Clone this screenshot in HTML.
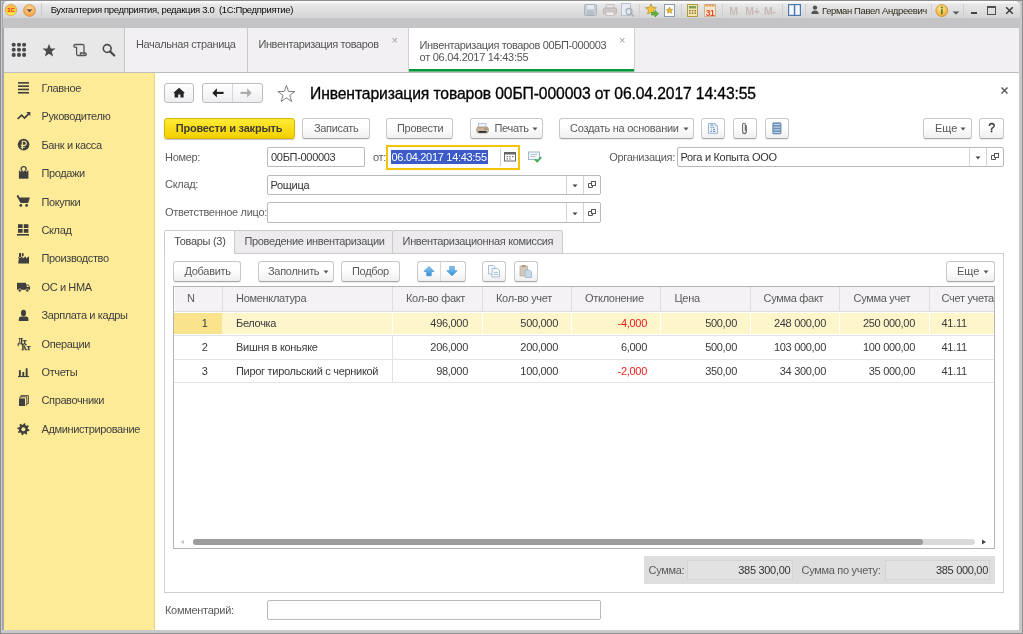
<!DOCTYPE html>
<html><head><meta charset="utf-8">
<style>
*{box-sizing:border-box;margin:0;padding:0}
html,body{width:1023px;height:634px;overflow:hidden;background:#a4a4a4}
body{font-family:"Liberation Sans",sans-serif;font-size:11px;color:#3c3c3c;position:relative}
.a{position:absolute}
.t{position:absolute;white-space:nowrap;line-height:1}
.btn{position:absolute;border:1px solid #c8c8c8;border-bottom-color:#a9a9a9;border-radius:3px;background:linear-gradient(#ffffff 40%,#f0eff1);box-shadow:0 1px 0 rgba(0,0,0,.08)}
.inp{position:absolute;border:1px solid #b9b9b9;border-radius:2px;background:#fff}
</style></head><body>

<div id="root" style="position:absolute;left:0;top:0;width:1023px;height:634px;overflow:hidden;will-change:transform">
<div class="a" style="left:0px;top:0px;width:1023px;height:634px;background:#8e8e8e"></div>
<div class="a" style="left:1px;top:1px;width:1021px;height:632px;background:#c9c9c9"></div>
<div class="a" style="left:2px;top:2px;width:1017px;height:628px;background:#a4a7ac"></div>
<div class="a" style="left:3px;top:1px;width:1017px;height:17px;background:linear-gradient(#fbfbfb 0px,#f6f6f6 2px,#e8e8e8 3px,#d5d5d5 17px);border-radius:5px 5px 0 0"></div>
<div class="a" style="left:3px;top:18px;width:1017px;height:10px;background:#c4c4c7"></div>
<div class="a" style="left:4px;top:28px;width:1015px;height:45px;background:#f3f0f3;border-bottom:1px solid #bdbdbd"></div>
<div class="a" style="left:4px;top:28px;width:121px;height:44px;background:#e8e8e8;border-right:1px solid #c6c6c6"></div>
<div class="a" style="left:4px;top:73px;width:151px;height:557px;background:#fdeb98;border-right:1px solid #e9d27a"></div>
<div class="a" style="left:155px;top:73px;width:864px;height:557px;background:#fff"></div>
<svg class="a" style="left:4px;top:3px;" width="14" height="14" viewBox="0 0 14 14"><defs><linearGradient id="g1c" x1="0" y1="0" x2="0" y2="1"><stop offset="0" stop-color="#f7b24a"/><stop offset="0.55" stop-color="#fbd23a"/><stop offset="1" stop-color="#f4f04a"/></linearGradient></defs><circle cx="7" cy="7" r="5.8" fill="url(#g1c)" stroke="#d9a070" stroke-width="0.8"/><text x="7" y="9" font-family="Liberation Sans" font-weight="bold" font-size="6" fill="#e8211c" text-anchor="middle">1С</text></svg>
<svg class="a" style="left:22px;top:3px;" width="15" height="15" viewBox="0 0 15 15"><defs><radialGradient id="gdd" cx="0.5" cy="0.35" r="0.6"><stop offset="0" stop-color="#ffd9a0"/><stop offset="1" stop-color="#f5a23c"/></radialGradient></defs><circle cx="7.5" cy="7.5" r="6" fill="url(#gdd)" stroke="#c89060" stroke-width="0.7"/><path d="M4.5 6.3 L10.5 6.3 L7.5 9.6 Z" fill="#6a5a48"/></svg>
<div class="a" style="left:41px;top:3px;width:1px;height:13px;background:#c9c9c9"></div>
<div class="t" style="left:50.7px;top:5.44px;font-size:9.5px;color:#080808;letter-spacing:-0.35px;font-weight:normal;">Бухгалтерия предприятия, редакция 3.0&nbsp;&nbsp;(1С:Предприятие)</div>
<svg class="a" style="left:584px;top:4px;" width="13" height="12" viewBox="0 0 13 12"><rect x="0.5" y="0.5" width="12" height="11" rx="1" fill="#c5ccd6" stroke="#aab4c0"/><rect x="3" y="1" width="7" height="4" fill="#e6eaef"/><rect x="3" y="7" width="7" height="4" fill="#b5bec9"/></svg>
<svg class="a" style="left:603px;top:4px;" width="14" height="12" viewBox="0 0 14 12"><rect x="3" y="0.5" width="8" height="4" fill="#e8e2e2" stroke="#c8c0c0"/><rect x="0.5" y="4" width="13" height="6" rx="1.5" fill="#cfc7c7" stroke="#b9b0b0"/><rect x="3" y="8" width="8" height="3.5" fill="#eee" stroke="#c8c0c0"/></svg>
<svg class="a" style="left:621px;top:3px;" width="14" height="14" viewBox="0 0 14 14"><rect x="0.5" y="0.5" width="9" height="12" fill="#e7ecf2" stroke="#b8c2cc"/><circle cx="8" cy="8.5" r="3" fill="none" stroke="#a8b0b8" stroke-width="1.3"/><path d="M10 10.5 L13 13.5" stroke="#a8b0b8" stroke-width="1.6"/></svg>
<div class="a" style="left:639px;top:4px;width:1px;height:13px;background:#cfcfcf"></div>
<svg class="a" style="left:645px;top:3px;" width="14" height="14" viewBox="0 0 14 14"><path d="M6 0.8 L7.6 4.4 L11.4 4.7 L8.5 7.2 L9.4 11 L6 9 L2.6 11 L3.5 7.2 L0.6 4.7 L4.4 4.4 Z" fill="#f2c53d" stroke="#b98a20" stroke-width="0.7"/><path d="M6.5 9.5 L10 9.5 L10 7.5 L13.5 10.8 L10 14 L10 12 L6.5 12 Z" fill="#5fb83a" stroke="#3e8a22" stroke-width="0.6"/></svg>
<svg class="a" style="left:664px;top:4px;" width="11" height="13" viewBox="0 0 11 13"><rect x="0.5" y="0.5" width="10" height="12" fill="#fff" stroke="#8a9ab0"/><path d="M5.5 3 L6.5 5.2 L8.8 5.4 L7 6.9 L7.6 9.2 L5.5 8 L3.4 9.2 L4 6.9 L2.2 5.4 L4.5 5.2 Z" fill="#f0c030" stroke="#a07010" stroke-width="0.5"/></svg>
<div class="a" style="left:681px;top:4px;width:1px;height:13px;background:#cfcfcf"></div>
<svg class="a" style="left:687px;top:4px;" width="11" height="13" viewBox="0 0 11 13"><rect x="0.5" y="0.5" width="10" height="12" fill="#f3e6a8" stroke="#b09a48"/><rect x="2" y="2" width="7" height="2.5" fill="#7aa05a"/><g fill="#8a7a40"><rect x="2" y="6" width="1.6" height="1.4"/><rect x="4.7" y="6" width="1.6" height="1.4"/><rect x="7.4" y="6" width="1.6" height="1.4"/><rect x="2" y="8.5" width="1.6" height="1.4"/><rect x="4.7" y="8.5" width="1.6" height="1.4"/><rect x="7.4" y="8.5" width="1.6" height="1.4"/></g></svg>
<svg class="a" style="left:704px;top:3px;" width="12" height="14" viewBox="0 0 12 14"><rect x="0.5" y="1.5" width="11" height="12" fill="#fbe8d0" stroke="#c8a880" stroke-width="0.8"/><rect x="1" y="2" width="10" height="2" fill="#f0c890"/><circle cx="3" cy="2.2" r="0.8" fill="#d08040"/><circle cx="6" cy="2.2" r="0.8" fill="#d08040"/><circle cx="9" cy="2.2" r="0.8" fill="#d08040"/><text x="6" y="12.6" font-family="Liberation Sans" font-weight="bold" font-size="8.5" fill="#e8482a" text-anchor="middle" letter-spacing="-0.5">31</text></svg>
<div class="a" style="left:722px;top:4px;width:1px;height:13px;background:#cfcfcf"></div>
<div class="t" style="left:729.3px;top:5.66px;font-size:10.5px;color:#c6b8b3;letter-spacing:0px;font-weight:bold;">M</div>
<div class="t" style="left:745.3px;top:5.66px;font-size:10.5px;color:#c6b8b3;letter-spacing:-0.3px;font-weight:bold;">M+</div>
<div class="t" style="left:763.9px;top:5.66px;font-size:10.5px;color:#c6b8b3;letter-spacing:-0.3px;font-weight:bold;">M-</div>
<div class="a" style="left:782px;top:4px;width:1px;height:13px;background:#cfcfcf"></div>
<svg class="a" style="left:788px;top:4px;" width="13" height="12" viewBox="0 0 13 12"><rect x="0.6" y="0.6" width="11.8" height="10.8" fill="#f4f8fc" stroke="#4a78b0" stroke-width="1.2"/><rect x="5.8" y="1" width="1.5" height="10" fill="#4a78b0"/></svg>
<div class="a" style="left:805px;top:4px;width:1px;height:13px;background:#cfcfcf"></div>
<svg class="a" style="left:811px;top:5px;" width="8" height="9" viewBox="0 0 8 9"><circle cx="4" cy="2.6" r="2.2" fill="#555"/><path d="M0.3 9 Q0.3 5.5 4 5.5 Q7.7 5.5 7.7 9 Z" fill="#555"/></svg>
<div class="t" style="left:822px;top:6.15px;font-size:9.5px;color:#302a1e;letter-spacing:-0.38px;font-weight:normal;">Герман Павел Андреевич</div>
<div class="a" style="left:931px;top:4px;width:1px;height:13px;background:#cfcfcf"></div>
<svg class="a" style="left:935px;top:4px;" width="14" height="14" viewBox="0 0 14 14"><defs><radialGradient id="gi" cx="0.45" cy="0.35" r="0.65"><stop offset="0" stop-color="#ffe9a0"/><stop offset="1" stop-color="#f0a82a"/></radialGradient></defs><circle cx="6.8" cy="6.6" r="6" fill="url(#gi)" stroke="#c08a30" stroke-width="0.7"/><rect x="6" y="5.2" width="1.7" height="5" fill="#5a7a1a"/><circle cx="6.85" cy="3.4" r="1" fill="#5a7a1a"/></svg>
<svg class="a" style="left:952px;top:11px;" width="8" height="4" viewBox="0 0 8 4"><path d="M0.5 0.5 L7.5 0.5 L4 3.5 Z" fill="#555"/></svg>
<div class="a" style="left:963px;top:4px;width:1px;height:13px;background:#cfcfcf"></div>
<div class="a" style="left:971px;top:12px;width:6px;height:1.5px;background:#444"></div>
<div class="a" style="left:987px;top:6px;width:9px;height:9px;border:1px solid #505050;border-top-width:2px"></div>
<svg class="a" style="left:1005px;top:6px;" width="9" height="9" viewBox="0 0 9 9"><path d="M1.2 1.2 L7.8 7.8 M7.8 1.2 L1.2 7.8" stroke="#3a3a3a" stroke-width="1.5"/></svg>
<svg class="a" style="left:0px;top:0px;" width="125" height="72" viewBox="0 0 125 72"><circle cx="13.7" cy="44.8" r="2.05" fill="#4a4a4a"/><circle cx="13.7" cy="49.8" r="2.05" fill="#4a4a4a"/><circle cx="13.7" cy="54.9" r="2.05" fill="#4a4a4a"/><circle cx="19" cy="44.8" r="2.05" fill="#4a4a4a"/><circle cx="19" cy="49.8" r="2.05" fill="#4a4a4a"/><circle cx="19" cy="54.9" r="2.05" fill="#4a4a4a"/><circle cx="24.1" cy="44.8" r="2.05" fill="#4a4a4a"/><circle cx="24.1" cy="49.8" r="2.05" fill="#4a4a4a"/><circle cx="24.1" cy="54.9" r="2.05" fill="#4a4a4a"/><path d="M49 43.8 L50.75 48.4 L55.6 48.6 L51.8 51.6 L53.1 56.4 L49 53.7 L44.9 56.4 L46.2 51.6 L42.4 48.6 L47.25 48.4 Z" fill="#4a4a4a"/><path d="M75.5 44.5 L82.5 44.5 Q84 44.5 84 46 L84 54.5 M75.5 44.5 Q73.8 44.5 73.8 46 Q73.8 47.3 75.5 47.3 L76.6 47.3 L76.6 54 Q76.6 55.5 78 55.5 L85 55.5 Q86.3 55.5 86.3 54.2 Q86.3 53 85 53 L80.5 53 L80.5 54.5 Q80.5 55.5 79 55.5" fill="none" stroke="#555" stroke-width="1.3"/><circle cx="107.2" cy="48.5" r="3.9" fill="none" stroke="#4a4a4a" stroke-width="1.6"/><path d="M110 51.4 L114.3 55.5" stroke="#4a4a4a" stroke-width="2.2" stroke-linecap="round"/></svg>
<div class="a" style="left:247px;top:28px;width:1px;height:44px;background:#c8c8c8"></div>
<div class="t" style="left:136px;top:39.21px;font-size:11px;color:#555;letter-spacing:-0.38px;font-weight:normal;">Начальная страница</div>
<div class="t" style="left:258.4px;top:39.21px;font-size:11px;color:#555;letter-spacing:-0.38px;font-weight:normal;">Инвентаризация товаров</div>
<div class="t" style="left:391.5px;top:35.11px;font-size:11px;color:#a0a0a0;letter-spacing:0px;font-weight:normal;">×</div>
<div class="a" style="left:408px;top:28px;width:227px;height:44px;background:#fff;border-left:1px solid #cfcfcf;border-right:1px solid #cfcfcf"></div>
<div class="a" style="left:409px;top:69px;width:225px;height:2px;background:#00963c"></div>
<div class="a" style="left:409px;top:71px;width:225px;height:1px;background:#62b880"></div>
<div class="t" style="left:419.6px;top:39.61px;font-size:11px;color:#555;letter-spacing:-0.38px;font-weight:normal;">Инвентаризация товаров 00БП-000003</div>
<div class="t" style="left:419.6px;top:51.81px;font-size:11px;color:#555;letter-spacing:-0.28px;font-weight:normal;">от 06.04.2017 14:43:55</div>
<div class="t" style="left:619px;top:35.11px;font-size:11px;color:#a0a0a0;letter-spacing:0px;font-weight:normal;">×</div>
<div class="t" style="left:41.5px;top:83.01px;font-size:11px;color:#3e3e3e;letter-spacing:-0.38px;font-weight:normal;">Главное</div>
<div class="t" style="left:41.5px;top:111.41px;font-size:11px;color:#3e3e3e;letter-spacing:-0.38px;font-weight:normal;">Руководителю</div>
<div class="t" style="left:41.5px;top:139.81px;font-size:11px;color:#3e3e3e;letter-spacing:-0.38px;font-weight:normal;">Банк и касса</div>
<div class="t" style="left:41.5px;top:168.21px;font-size:11px;color:#3e3e3e;letter-spacing:-0.38px;font-weight:normal;">Продажи</div>
<div class="t" style="left:41.5px;top:196.61px;font-size:11px;color:#3e3e3e;letter-spacing:-0.38px;font-weight:normal;">Покупки</div>
<div class="t" style="left:41.5px;top:225.01px;font-size:11px;color:#3e3e3e;letter-spacing:-0.38px;font-weight:normal;">Склад</div>
<div class="t" style="left:41.5px;top:253.41px;font-size:11px;color:#3e3e3e;letter-spacing:-0.38px;font-weight:normal;">Производство</div>
<div class="t" style="left:41.5px;top:281.81px;font-size:11px;color:#3e3e3e;letter-spacing:-0.38px;font-weight:normal;">ОС и НМА</div>
<div class="t" style="left:41.5px;top:310.21px;font-size:11px;color:#3e3e3e;letter-spacing:-0.38px;font-weight:normal;">Зарплата и кадры</div>
<div class="t" style="left:41.5px;top:338.61px;font-size:11px;color:#3e3e3e;letter-spacing:-0.38px;font-weight:normal;">Операции</div>
<div class="t" style="left:41.5px;top:367.01px;font-size:11px;color:#3e3e3e;letter-spacing:-0.38px;font-weight:normal;">Отчеты</div>
<div class="t" style="left:41.5px;top:395.41px;font-size:11px;color:#3e3e3e;letter-spacing:-0.38px;font-weight:normal;">Справочники</div>
<div class="t" style="left:41.5px;top:423.81px;font-size:11px;color:#3e3e3e;letter-spacing:-0.38px;font-weight:normal;">Администрирование</div>
<svg class="a" style="left:0px;top:0px;" width="154" height="440" viewBox="0 0 154 440"><rect x="18" y="82.05" width="11" height="1.6" fill="#3f3f3f"/><rect x="18" y="85.35" width="11" height="1.6" fill="#3f3f3f"/><rect x="18" y="88.65" width="11" height="1.6" fill="#3f3f3f"/><rect x="18" y="91.95" width="11" height="1.6" fill="#3f3f3f"/><path d="M17.6 119 L21.6 115.2 L24.6 118 L28.6 113.8" fill="none" stroke="#3f3f3f" stroke-width="1.7"/><path d="M26.2 112 L30.3 112 L30.3 116 Z" fill="#3f3f3f"/><circle cx="23.6" cy="144.6" r="5.8" fill="#3f3f3f"/><path d="M22.3 149.2 L22.3 141.2 L24.4 141.2 Q26.3 141.2 26.3 143.3 Q26.3 145.4 24.4 145.4 L20.8 145.4 M20.8 147.2 L24.8 147.2" fill="none" stroke="#fcea9a" stroke-width="1.1"/><path d="M18.9 170.2 L28.4 170.2 L28.4 178.7 L18.9 178.7 Z" fill="#3f3f3f"/><path d="M21.3 171.5 L21.3 168.6 Q21.3 166.6 23.65 166.6 Q26 166.6 26 168.6 L26 171.5" fill="none" stroke="#3f3f3f" stroke-width="1.4"/><path d="M18.9 170.2 L20.5 171.8 L22 170.2 L23.6 171.8 L25.2 170.2 L26.8 171.8 L28.4 170.2" fill="#fcea9a"/><path d="M16.6 195.9 L18.6 195.9 L19.6 197.6 L29.8 197.6 L28.2 203 L20.6 203 Z" fill="#3f3f3f"/><path d="M17 196 L18.8 196" stroke="#3f3f3f" stroke-width="1.3"/><circle cx="20.8" cy="205.4" r="1.4" fill="#3f3f3f"/><circle cx="26.6" cy="205.4" r="1.4" fill="#3f3f3f"/><rect x="18" y="224.2" width="4.6" height="3.8" fill="#3f3f3f"/><rect x="23.8" y="224.2" width="4.6" height="3.8" fill="#3f3f3f"/><rect x="18" y="229" width="4.6" height="3.8" fill="#3f3f3f"/><rect x="23.8" y="229" width="4.6" height="3.8" fill="#3f3f3f"/><rect x="17" y="234" width="12" height="1.6" fill="#3f3f3f"/><path d="M18.2 263.6 L18.2 257 L21.2 257 L21.2 253.2 L19 253.2 L19 257 M18.2 263.6 L29 263.6 L29 256.3 L26 258.6 L26 256.3 L22.6 258.6 L22.6 256.6 L20 258 L18.2 258 Z" fill="#3f3f3f"/><rect x="19" y="253.2" width="1.8" height="4.2" fill="#3f3f3f"/><rect x="22" y="253.2" width="1.6" height="3" fill="#3f3f3f"/><rect x="17" y="282.8" width="9" height="7" fill="#3f3f3f"/><path d="M26 284.5 L28.3 284.5 L30 287 L30 289.8 L26 289.8 Z" fill="#3f3f3f"/><path d="M26.8 285.3 L28 285.3 L29 287 L26.8 287 Z" fill="#fcea9a"/><circle cx="19.8" cy="290.4" r="1.5" fill="#3f3f3f" stroke="#fcea9a" stroke-width="0.6"/><circle cx="27.3" cy="290.4" r="1.5" fill="#3f3f3f" stroke="#fcea9a" stroke-width="0.6"/><ellipse cx="23.5" cy="313.1" rx="2.5" ry="3.3" fill="#3f3f3f"/><path d="M18.8 320.9 L18.8 319 Q18.8 316.6 21.2 316.6 L25.8 316.6 Q28.4 316.6 28.4 319 L28.4 320.9 Z" fill="#3f3f3f"/><text x="17.8" y="343.8" font-family="Liberation Serif" font-weight="bold" font-size="7.5" fill="#3f3f3f" stroke="#3f3f3f" stroke-width="0.25" letter-spacing="-0.2">Дт</text><text x="21.6" y="349.8" font-family="Liberation Serif" font-weight="bold" font-size="7.5" fill="#3f3f3f" stroke="#3f3f3f" stroke-width="0.25" letter-spacing="-0.2">Кт</text><rect x="18.9" y="370.2" width="1.9" height="6" fill="#3f3f3f"/><rect x="22.3" y="372" width="1.9" height="4.2" fill="#3f3f3f"/><rect x="25.7" y="368.3" width="1.9" height="7.9" fill="#3f3f3f"/><rect x="18" y="376" width="11" height="1.1" fill="#3f3f3f"/><path d="M21 397 L21 395.6 L28.4 395.6 L28.4 403.5 L27 403.5" fill="none" stroke="#3f3f3f" stroke-width="0.9"/><path d="M20 398 L20 396.8 L26.8 396.8 L26.8 405 L25.6 405" fill="none" stroke="#3f3f3f" stroke-width="0.9"/><rect x="19" y="398.4" width="6" height="7.6" fill="#3f3f3f"/><polygon points="24.00,423.13 25.17,423.36 25.47,425.32 26.19,425.80 28.12,425.33 28.78,426.32 27.61,427.92 27.78,428.77 29.47,429.80 29.24,430.97 27.28,431.27 26.80,431.99 27.27,433.92 26.28,434.58 24.68,433.41 23.83,433.58 22.80,435.27 21.63,435.04 21.33,433.08 20.61,432.60 18.68,433.07 18.02,432.08 19.19,430.48 19.02,429.63 17.33,428.60 17.56,427.43 19.52,427.13 20.00,426.41 19.53,424.48 20.52,423.82 22.12,424.99 22.97,424.82" fill="#3f3f3f"/><circle cx="23.4" cy="429.2" r="2" fill="#fcea9a"/></svg>
<div class="btn" style="left:164px;top:83px;width:30px;height:20px;background:linear-gradient(#ffffff,#efedf1);border-color:#bdbdbd;box-shadow:none"></div>
<svg class="a" style="left:170px;top:85px;" width="18" height="16" viewBox="0 0 18 16"><path d="M9.1 2.8 L14.7 7.8 L13.6 8.6 L13.6 12.6 L10.4 12.6 L10.4 9.6 L8.2 9.6 L8.2 12.6 L4.6 12.6 L4.6 8.6 L3.6 7.8 Z" fill="#262626"/></svg>
<div class="btn" style="left:202px;top:83px;width:61px;height:20px;background:linear-gradient(#ffffff,#efedf1);border-color:#bdbdbd;box-shadow:none"></div>
<div class="a" style="left:232px;top:84px;width:1px;height:18px;background:#d6d6d6"></div>
<svg class="a" style="left:202px;top:83px;" width="61" height="20" viewBox="0 0 61 20"><path d="M10.3 9.9 L14.9 5.3 L14.9 14.5 Z" fill="#1e1e1e"/><rect x="14" y="8.85" width="7.6" height="2.1" fill="#1e1e1e"/><rect x="38.5" y="8.85" width="7.2" height="2.1" fill="#aaaaaa"/><path d="M49.6 9.9 L45.2 5.3 L45.2 14.5 Z" fill="#aaaaaa"/></svg>
<svg class="a" style="left:276px;top:84px;" width="21" height="20" viewBox="0 0 21 20"><polygon points="10.40,1.40 12.49,7.43 18.86,7.55 13.78,11.40 15.63,17.50 10.40,13.85 5.17,17.50 7.02,11.40 1.94,7.55 8.31,7.43" fill="#fff" stroke="#7c7c7c" stroke-width="1" stroke-linejoin="miter"/></svg>
<div class="t" style="left:310px;top:86.11px;font-size:15.7px;color:#000;letter-spacing:-0.12px;font-weight:normal;-webkit-text-stroke:0.3px #000">Инвентаризация товаров 00БП-000003 от 06.04.2017 14:43:55</div>
<svg class="a" style="left:1000px;top:86px;" width="9" height="9" viewBox="0 0 9 9"><path d="M1.5 1.5 L7.5 7.5 M7.5 1.5 L1.5 7.5" stroke="#555" stroke-width="1.4"/></svg>
<div class="btn" style="left:164px;top:118px;width:131px;height:21px;background:linear-gradient(#ffea35,#f3d000);border-color:#d8b500;box-shadow:0 1px 1px rgba(0,0,0,.25)"></div>
<div class="t" style="left:175.7px;top:123.01px;font-size:11px;color:#3f3d30;letter-spacing:-0.2px;font-weight:bold;">Провести и закрыть</div>
<div class="btn" style="left:302px;top:118px;width:68px;height:21px;"></div>
<div class="t" style="left:313.9px;top:123.11px;font-size:11px;color:#5a5a5a;letter-spacing:-0.3px;font-weight:normal;">Записать</div>
<div class="btn" style="left:386px;top:118px;width:67px;height:21px;"></div>
<div class="t" style="left:397px;top:123.11px;font-size:11px;color:#5a5a5a;letter-spacing:-0.3px;font-weight:normal;">Провести</div>
<div class="btn" style="left:470px;top:118px;width:73px;height:21px;"></div>
<svg class="a" style="left:476px;top:122px;" width="14" height="13" viewBox="0 0 14 13"><rect x="2.5" y="1.5" width="7.5" height="4.5" fill="#eef3f9" stroke="#a9b9cc" stroke-width="0.8"/><rect x="0.8" y="5" width="11.5" height="6" rx="1.8" fill="#c9b39e" stroke="#9c8570" stroke-width="0.7"/><rect x="2.5" y="9" width="8" height="1.8" fill="#2e2e2e"/><rect x="8.3" y="6.5" width="1.3" height="1" fill="#e04040"/><rect x="10" y="6.5" width="1.3" height="1" fill="#40b040"/></svg>
<div class="t" style="left:494.5px;top:123.11px;font-size:11px;color:#5a5a5a;letter-spacing:-0.3px;font-weight:normal;">Печать</div>
<svg class="a" style="left:532px;top:127px;" width="6" height="4" viewBox="0 0 6 4"><path d="M0.5 0.5 L5.5 0.5 L3 3.5 Z" fill="#555"/></svg>
<div class="btn" style="left:559px;top:118px;width:135px;height:21px;"></div>
<div class="t" style="left:570px;top:123.11px;font-size:11px;color:#5a5a5a;letter-spacing:-0.27px;font-weight:normal;">Создать на основании</div>
<svg class="a" style="left:683px;top:127px;" width="6" height="4" viewBox="0 0 6 4"><path d="M0.5 0.5 L5.5 0.5 L3 3.5 Z" fill="#555"/></svg>
<div class="btn" style="left:701px;top:118px;width:24px;height:21px;"></div>
<svg class="a" style="left:706px;top:121px;" width="14" height="15" viewBox="0 0 14 15"><path d="M2.5 2.4 L9 2.4 L11.6 5 L11.6 12.4 L2.5 12.4 Z" fill="#eef4fa" stroke="#9cb6d0" stroke-width="1"/><path d="M9 2.4 L9 5 L11.6 5" fill="#d8e6f2" stroke="#9cb6d0" stroke-width="0.7"/><g stroke="#5a86b4" stroke-width="1"><path d="M4.4 4 L7.2 4 M4.4 6.3 L5.6 6.3 M6.6 6.3 L8.2 6.3 M5.2 8.2 L6 8.2 M7 8.4 L9 8.4 M4.4 10.4 L6 10.4 M7 10.4 L9.4 10.4"/></g></svg>
<div class="btn" style="left:733px;top:118px;width:24px;height:21px;"></div>
<svg class="a" style="left:739px;top:121px;" width="12" height="15" viewBox="0 0 12 15"><path d="M7.4 4.2 L7.4 10.3 Q7.4 12.6 5.5 12.6 Q3.6 12.6 3.6 10.3 L3.6 3.8 Q3.6 2.2 5 2.2 Q6.3 2.2 6.3 3.8 L6.3 9.8" fill="none" stroke="#6a6a6a" stroke-width="1.1"/></svg>
<div class="btn" style="left:765px;top:118px;width:24px;height:21px;"></div>
<svg class="a" style="left:770px;top:121px;" width="14" height="15" viewBox="0 0 14 15"><rect x="2.7" y="1.7" width="8.4" height="11.2" rx="1" fill="#6d90b6" stroke="#5a7ea6" stroke-width="0.6"/><g fill="#c4d6e8"><rect x="3.5" y="2.9" width="6.8" height="1.1"/><rect x="3.5" y="5.6" width="6.8" height="1.1"/><rect x="3.5" y="8.3" width="6.8" height="1.1"/><rect x="3.5" y="11" width="6.8" height="1"/></g></svg>
<div class="btn" style="left:923px;top:118px;width:49px;height:21px;"></div>
<div class="t" style="left:935px;top:123.21px;font-size:11px;color:#5a5a5a;letter-spacing:0px;font-weight:normal;">Еще</div>
<svg class="a" style="left:960px;top:127px;" width="6" height="4" viewBox="0 0 6 4"><path d="M0.5 0.5 L5.5 0.5 L3 3.5 Z" fill="#555"/></svg>
<div class="btn" style="left:979px;top:118px;width:25px;height:21px;"></div>
<div class="t" style="left:988.3px;top:122.07px;font-size:12.5px;color:#2a2a2a;letter-spacing:0px;font-weight:normal;-webkit-text-stroke:0.3px #2a2a2a">?</div>
<div class="t" style="left:165px;top:151.81px;font-size:11px;color:#5c5c5c;letter-spacing:-0.3px;font-weight:normal;">Номер:</div>
<div class="inp" style="left:267px;top:147px;width:98px;height:20px"></div>
<div class="t" style="left:271px;top:151.81px;font-size:11px;color:#333;letter-spacing:-0.3px;font-weight:normal;">00БП-000003</div>
<div class="t" style="left:373px;top:151.81px;font-size:11px;color:#5c5c5c;letter-spacing:-0.3px;font-weight:normal;">от:</div>
<div class="a" style="left:386px;top:145px;width:134px;height:25px;border:2px solid #f5c400;background:#fff"></div>
<div class="a" style="left:391px;top:150px;width:97px;height:14px;background:#3b5bc9"></div>
<div class="t" style="left:391.5px;top:151.81px;font-size:11px;color:#fff;letter-spacing:-0.3px;font-weight:normal;">06.04.2017 14:43:55</div>
<div class="a" style="left:500px;top:149px;width:1px;height:17px;background:#d0d0d0"></div>
<svg class="a" style="left:504px;top:152px;" width="12" height="10" viewBox="0 0 12 10"><rect x="0.5" y="0.5" width="11" height="8.5" fill="#fff" stroke="#666" stroke-width="1"/><rect x="0.5" y="0.5" width="11" height="2" fill="#666"/><g fill="#777"><rect x="2.5" y="4" width="1.5" height="1.2"/><rect x="5.2" y="4" width="1.5" height="1.2"/><rect x="8" y="4" width="1.5" height="1.2"/><rect x="2.5" y="6.3" width="1.5" height="1.2"/><rect x="5.2" y="6.3" width="1.5" height="1.2"/></g></svg>
<svg class="a" style="left:527px;top:150px;" width="16" height="14" viewBox="0 0 16 14"><rect x="1.5" y="2" width="11" height="7.5" fill="#f2f6fb" stroke="#98b0c8" stroke-width="0.9"/><path d="M3.5 4.5 L10.5 4.5 M3.5 6.5 L8.5 6.5" stroke="#a8bcd0" stroke-width="0.8"/><path d="M8 9.3 L10.2 11.5 L14.2 7.2" fill="none" stroke="#3cae48" stroke-width="1.8"/></svg>
<div class="t" style="left:609.2px;top:151.81px;font-size:11px;color:#5c5c5c;letter-spacing:-0.3px;font-weight:normal;">Организация:</div>
<div class="inp" style="left:677px;top:147px;width:327px;height:20px"></div>
<div class="t" style="left:680.5px;top:151.81px;font-size:11px;color:#333;letter-spacing:-0.3px;font-weight:normal;">Рога и Копыта ООО</div>
<div class="a" style="left:969px;top:148px;width:1px;height:18px;background:#d4d4d4"></div>
<div class="a" style="left:986px;top:148px;width:1px;height:18px;background:#d4d4d4"></div>
<svg class="a" style="left:975px;top:156.0px;" width="6" height="4" viewBox="0 0 6 4"><path d="M0.5 0.5 L5.5 0.5 L3 3.2 Z" fill="#444"/></svg>
<svg class="a" style="left:990px;top:152.0px;" width="10" height="10" viewBox="0 0 10 10"><rect x="4.5" y="1.5" width="4" height="4" fill="none" stroke="#555" stroke-width="1"/><path d="M4 3.5 L1.5 3.5 L1.5 7.5 L5.5 7.5 L5.5 6" fill="none" stroke="#555" stroke-width="1"/></svg>
<div class="t" style="left:165px;top:179.41px;font-size:11px;color:#5c5c5c;letter-spacing:-0.3px;font-weight:normal;">Склад:</div>
<div class="inp" style="left:267px;top:175px;width:334px;height:20px"></div>
<div class="t" style="left:270.5px;top:179.81px;font-size:11px;color:#333;letter-spacing:-0.3px;font-weight:normal;">Рощица</div>
<div class="a" style="left:566px;top:176px;width:1px;height:18px;background:#d4d4d4"></div>
<div class="a" style="left:583px;top:176px;width:1px;height:18px;background:#d4d4d4"></div>
<svg class="a" style="left:572px;top:184.0px;" width="6" height="4" viewBox="0 0 6 4"><path d="M0.5 0.5 L5.5 0.5 L3 3.2 Z" fill="#444"/></svg>
<svg class="a" style="left:587px;top:180.0px;" width="10" height="10" viewBox="0 0 10 10"><rect x="4.5" y="1.5" width="4" height="4" fill="none" stroke="#555" stroke-width="1"/><path d="M4 3.5 L1.5 3.5 L1.5 7.5 L5.5 7.5 L5.5 6" fill="none" stroke="#555" stroke-width="1"/></svg>
<div class="t" style="left:165px;top:207.21px;font-size:11px;color:#5c5c5c;letter-spacing:-0.3px;font-weight:normal;">Ответственное лицо:</div>
<div class="inp" style="left:267px;top:202px;width:334px;height:21px"></div>
<div class="a" style="left:566px;top:203px;width:1px;height:19px;background:#d4d4d4"></div>
<div class="a" style="left:583px;top:203px;width:1px;height:19px;background:#d4d4d4"></div>
<svg class="a" style="left:572px;top:211.5px;" width="6" height="4" viewBox="0 0 6 4"><path d="M0.5 0.5 L5.5 0.5 L3 3.2 Z" fill="#444"/></svg>
<svg class="a" style="left:587px;top:207.5px;" width="10" height="10" viewBox="0 0 10 10"><rect x="4.5" y="1.5" width="4" height="4" fill="none" stroke="#555" stroke-width="1"/><path d="M4 3.5 L1.5 3.5 L1.5 7.5 L5.5 7.5 L5.5 6" fill="none" stroke="#555" stroke-width="1"/></svg>
<div class="a" style="left:164px;top:253px;width:840px;height:340px;border:1px solid #cfcfcf;background:#fff"></div>
<div class="a" style="left:234px;top:230px;width:159px;height:24px;background:#edebee;border:1px solid #cbcbcb;border-radius:2px 2px 0 0"></div>
<div class="a" style="left:392px;top:230px;width:171px;height:24px;background:#edebee;border:1px solid #cbcbcb;border-radius:2px 2px 0 0"></div>
<div class="a" style="left:164px;top:230px;width:71px;height:24px;background:#fff;border:1px solid #cbcbcb;border-bottom:none;border-radius:2px 2px 0 0"></div>
<div class="t" style="left:174.2px;top:236.41px;font-size:11px;color:#4a4a4a;letter-spacing:-0.3px;font-weight:normal;">Товары (3)</div>
<div class="t" style="left:244.5px;top:236.41px;font-size:11px;color:#525252;letter-spacing:-0.35px;font-weight:normal;">Проведение инвентаризации</div>
<div class="t" style="left:402.6px;top:236.41px;font-size:11px;color:#525252;letter-spacing:-0.35px;font-weight:normal;">Инвентаризационная комиссия</div>
<div class="btn" style="left:173px;top:261px;width:68px;height:21px;"></div>
<div class="t" style="left:184.5px;top:266.11px;font-size:11px;color:#5a5a5a;letter-spacing:-0.3px;font-weight:normal;">Добавить</div>
<div class="btn" style="left:258px;top:261px;width:76px;height:21px;"></div>
<div class="t" style="left:268px;top:266.11px;font-size:11px;color:#5a5a5a;letter-spacing:-0.3px;font-weight:normal;">Заполнить</div>
<svg class="a" style="left:323px;top:270px;" width="6" height="4" viewBox="0 0 6 4"><path d="M0.5 0.5 L5.5 0.5 L3 3.5 Z" fill="#555"/></svg>
<div class="btn" style="left:341px;top:261px;width:59px;height:21px;"></div>
<div class="t" style="left:352px;top:266.11px;font-size:11px;color:#5a5a5a;letter-spacing:-0.3px;font-weight:normal;">Подбор</div>
<div class="btn" style="left:417px;top:261px;width:49px;height:21px;"></div>
<div class="a" style="left:440px;top:262px;width:1px;height:19px;background:#d6d6d6"></div>
<svg class="a" style="left:422px;top:264px;" width="14" height="14" viewBox="0 0 14 14"><defs><linearGradient id="gar" x1="0" y1="0" x2="0" y2="1"><stop offset="0" stop-color="#8ccaf5"/><stop offset="1" stop-color="#2d8ed8"/></linearGradient></defs><path d="M7 2.5 L12.2 7.6 L9.3 7.6 L9.3 11.8 L4.7 11.8 L4.7 7.6 L1.8 7.6 Z" fill="url(#gar)" stroke="#3a86c8" stroke-width="0.6"/></svg>
<svg class="a" style="left:445px;top:264px;" width="14" height="14" viewBox="0 0 14 14"><path d="M7 11.8 L12.2 6.7 L9.3 6.7 L9.3 2.5 L4.7 2.5 L4.7 6.7 L1.8 6.7 Z" fill="url(#gar)" stroke="#3a86c8" stroke-width="0.6"/></svg>
<div class="btn" style="left:482px;top:261px;width:24px;height:21px;"></div>
<svg class="a" style="left:487px;top:264px;" width="14" height="15" viewBox="0 0 14 15"><path d="M1.5 1.5 L6.5 1.5 L8 3 L8 10 L1.5 10 Z" fill="#f4f8fc" stroke="#9fbad6" stroke-width="0.9"/><path d="M5 4.5 L10.5 4.5 L12.5 6.5 L12.5 13 L5 13 Z" fill="#f4f8fc" stroke="#9fbad6" stroke-width="0.9"/><path d="M6.8 8.5 L11 8.5 M6.8 10.5 L11 10.5" stroke="#9fbad6" stroke-width="0.8"/></svg>
<div class="btn" style="left:514px;top:261px;width:24px;height:21px;"></div>
<svg class="a" style="left:519px;top:264px;" width="14" height="15" viewBox="0 0 14 15"><rect x="1" y="2" width="7.5" height="10" fill="#d4c8b8" stroke="#b8a890" stroke-width="0.7"/><rect x="3" y="1" width="3.5" height="2" fill="#a89880"/><path d="M6 6 L10.5 6 L12.5 8 L12.5 13.5 L6 13.5 Z" fill="#c8d8e8" stroke="#9fb6cc" stroke-width="0.8"/></svg>
<div class="btn" style="left:946px;top:261px;width:49px;height:21px;"></div>
<div class="t" style="left:957px;top:266.21px;font-size:11px;color:#5a5a5a;letter-spacing:0px;font-weight:normal;">Еще</div>
<svg class="a" style="left:983px;top:270px;" width="6" height="4" viewBox="0 0 6 4"><path d="M0.5 0.5 L5.5 0.5 L3 3.5 Z" fill="#555"/></svg>
<div class="a" style="left:173px;top:286px;width:822px;height:263px;border:1px solid #b3b3b3;background:#fff"></div>
<div class="a" style="left:174px;top:287px;width:820px;height:25px;background:#f4f2f5;border-bottom:1px solid #dcdcdc;border-left:1px solid #fff"></div>
<div class="a" style="left:222px;top:287px;width:1px;height:25px;background:#dedcdf"></div>
<div class="a" style="left:392px;top:287px;width:1px;height:25px;background:#dedcdf"></div>
<div class="a" style="left:482px;top:287px;width:1px;height:25px;background:#dedcdf"></div>
<div class="a" style="left:571px;top:287px;width:1px;height:25px;background:#dedcdf"></div>
<div class="a" style="left:660px;top:287px;width:1px;height:25px;background:#dedcdf"></div>
<div class="a" style="left:750px;top:287px;width:1px;height:25px;background:#dedcdf"></div>
<div class="a" style="left:839px;top:287px;width:1px;height:25px;background:#dedcdf"></div>
<div class="a" style="left:929px;top:287px;width:1px;height:25px;background:#dedcdf"></div>
<div class="t" style="left:187px;top:293.41px;font-size:11px;color:#5a5a5a;letter-spacing:-0.3px;font-weight:normal;">N</div>
<div class="t" style="left:236px;top:293.41px;font-size:11px;color:#5a5a5a;letter-spacing:-0.3px;font-weight:normal;">Номенклатура</div>
<div class="t" style="left:406px;top:293.41px;font-size:11px;color:#5a5a5a;letter-spacing:-0.3px;font-weight:normal;">Кол-во факт</div>
<div class="t" style="left:496px;top:293.41px;font-size:11px;color:#5a5a5a;letter-spacing:-0.3px;font-weight:normal;">Кол-во учет</div>
<div class="t" style="left:585px;top:293.41px;font-size:11px;color:#5a5a5a;letter-spacing:-0.3px;font-weight:normal;">Отклонение</div>
<div class="t" style="left:674.5px;top:293.41px;font-size:11px;color:#5a5a5a;letter-spacing:-0.3px;font-weight:normal;">Цена</div>
<div class="t" style="left:763.5px;top:293.41px;font-size:11px;color:#5a5a5a;letter-spacing:-0.3px;font-weight:normal;">Сумма факт</div>
<div class="t" style="left:853.5px;top:293.41px;font-size:11px;color:#5a5a5a;letter-spacing:-0.3px;font-weight:normal;">Сумма учет</div>
<div class="t" style="left:941.5px;top:293.41px;font-size:11px;color:#5a5a5a;letter-spacing:-0.3px;font-weight:normal;">Счет учета</div>
<div class="a" style="left:174px;top:313px;width:820px;height:21px;background:#fdf6cb"></div>
<div class="a" style="left:174px;top:313px;width:48px;height:21px;background:#f9e48d"></div>
<div class="a" style="left:392px;top:313px;width:1px;height:21px;background:#ffffff"></div>
<div class="a" style="left:482px;top:313px;width:1px;height:21px;background:#ffffff"></div>
<div class="a" style="left:571px;top:313px;width:1px;height:21px;background:#ffffff"></div>
<div class="a" style="left:660px;top:313px;width:1px;height:21px;background:#ffffff"></div>
<div class="a" style="left:750px;top:313px;width:1px;height:21px;background:#ffffff"></div>
<div class="a" style="left:839px;top:313px;width:1px;height:21px;background:#ffffff"></div>
<div class="a" style="left:929px;top:313px;width:1px;height:21px;background:#ffffff"></div>
<div class="a" style="left:392px;top:335px;width:1px;height:47px;background:#e2e2e2"></div>
<div class="a" style="left:174px;top:335px;width:820px;height:1px;background:#e4e4e4"></div>
<div class="a" style="left:174px;top:359px;width:820px;height:1px;background:#e4e4e4"></div>
<div class="a" style="left:174px;top:382px;width:820px;height:1px;background:#e4e4e4"></div>
<div class="t" style="right:815.5px;top:318.21px;font-size:11px;color:#3a3a3a;letter-spacing:-0.3px;font-weight:normal;">1</div>
<div class="t" style="left:236px;top:318.21px;font-size:11px;color:#3a3a3a;letter-spacing:-0.3px;font-weight:normal;">Белочка</div>
<div class="t" style="right:555px;top:318.21px;font-size:11px;color:#3a3a3a;letter-spacing:-0.3px;font-weight:normal;">496,000</div>
<div class="t" style="right:465px;top:318.21px;font-size:11px;color:#3a3a3a;letter-spacing:-0.3px;font-weight:normal;">500,000</div>
<div class="t" style="right:376px;top:318.21px;font-size:11px;color:#f01c1c;letter-spacing:-0.3px;font-weight:normal;">-4,000</div>
<div class="t" style="right:286px;top:318.21px;font-size:11px;color:#3a3a3a;letter-spacing:-0.3px;font-weight:normal;">500,00</div>
<div class="t" style="right:197px;top:318.21px;font-size:11px;color:#3a3a3a;letter-spacing:-0.3px;font-weight:normal;">248 000,00</div>
<div class="t" style="right:108px;top:318.21px;font-size:11px;color:#3a3a3a;letter-spacing:-0.3px;font-weight:normal;">250 000,00</div>
<div class="t" style="left:941.5px;top:318.21px;font-size:11px;color:#3a3a3a;letter-spacing:-0.3px;font-weight:normal;">41.11</div>
<div class="t" style="right:815.5px;top:342.01px;font-size:11px;color:#3a3a3a;letter-spacing:-0.3px;font-weight:normal;">2</div>
<div class="t" style="left:236px;top:342.01px;font-size:11px;color:#3a3a3a;letter-spacing:-0.3px;font-weight:normal;">Вишня в коньяке</div>
<div class="t" style="right:555px;top:342.01px;font-size:11px;color:#3a3a3a;letter-spacing:-0.3px;font-weight:normal;">206,000</div>
<div class="t" style="right:465px;top:342.01px;font-size:11px;color:#3a3a3a;letter-spacing:-0.3px;font-weight:normal;">200,000</div>
<div class="t" style="right:376px;top:342.01px;font-size:11px;color:#3a3a3a;letter-spacing:-0.3px;font-weight:normal;">6,000</div>
<div class="t" style="right:286px;top:342.01px;font-size:11px;color:#3a3a3a;letter-spacing:-0.3px;font-weight:normal;">500,00</div>
<div class="t" style="right:197px;top:342.01px;font-size:11px;color:#3a3a3a;letter-spacing:-0.3px;font-weight:normal;">103 000,00</div>
<div class="t" style="right:108px;top:342.01px;font-size:11px;color:#3a3a3a;letter-spacing:-0.3px;font-weight:normal;">100 000,00</div>
<div class="t" style="left:941.5px;top:342.01px;font-size:11px;color:#3a3a3a;letter-spacing:-0.3px;font-weight:normal;">41.11</div>
<div class="t" style="right:815.5px;top:365.61px;font-size:11px;color:#3a3a3a;letter-spacing:-0.3px;font-weight:normal;">3</div>
<div class="t" style="left:236px;top:365.61px;font-size:11px;color:#3a3a3a;letter-spacing:-0.3px;font-weight:normal;">Пирог тирольский с черникой</div>
<div class="t" style="right:555px;top:365.61px;font-size:11px;color:#3a3a3a;letter-spacing:-0.3px;font-weight:normal;">98,000</div>
<div class="t" style="right:465px;top:365.61px;font-size:11px;color:#3a3a3a;letter-spacing:-0.3px;font-weight:normal;">100,000</div>
<div class="t" style="right:376px;top:365.61px;font-size:11px;color:#f01c1c;letter-spacing:-0.3px;font-weight:normal;">-2,000</div>
<div class="t" style="right:286px;top:365.61px;font-size:11px;color:#3a3a3a;letter-spacing:-0.3px;font-weight:normal;">350,00</div>
<div class="t" style="right:197px;top:365.61px;font-size:11px;color:#3a3a3a;letter-spacing:-0.3px;font-weight:normal;">34 300,00</div>
<div class="t" style="right:108px;top:365.61px;font-size:11px;color:#3a3a3a;letter-spacing:-0.3px;font-weight:normal;">35 000,00</div>
<div class="t" style="left:941.5px;top:365.61px;font-size:11px;color:#3a3a3a;letter-spacing:-0.3px;font-weight:normal;">41.11</div>
<svg class="a" style="left:178px;top:537px;" width="812" height="10" viewBox="0 0 812 10"><path d="M6 3 L2.5 5 L6 7 Z" fill="#c8c8c8"/><rect x="15" y="2" width="782" height="6" rx="3" fill="#d9d9d9"/><rect x="15" y="2" width="730" height="6" rx="3" fill="#9c9c9c"/><path d="M804 2.5 L808 5 L804 7.5 Z" fill="#444"/></svg>
<div class="a" style="left:994px;top:287px;width:1px;height:261px;background:#b3b3b3"></div>
<div class="a" style="left:995px;top:287px;width:8px;height:26px;background:#fff"></div>
<div class="a" style="left:644px;top:556px;width:351px;height:28px;background:#dedede"></div>
<div class="t" style="left:648.5px;top:564.81px;font-size:11px;color:#5c5c5c;letter-spacing:-0.3px;font-weight:normal;">Сумма:</div>
<div class="a" style="left:687px;top:560px;width:106px;height:20px;background:#e2e2e2;border:1px solid #d4d4d4"></div>
<div class="t" style="right:232.70000000000005px;top:564.81px;font-size:11px;color:#333;letter-spacing:-0.3px;font-weight:normal;">385 300,00</div>
<div class="t" style="left:801.5px;top:564.81px;font-size:11px;color:#5c5c5c;letter-spacing:-0.3px;font-weight:normal;">Сумма по учету:</div>
<div class="a" style="left:885px;top:560px;width:105px;height:20px;background:#e2e2e2;border:1px solid #d4d4d4"></div>
<div class="t" style="right:35px;top:564.81px;font-size:11px;color:#333;letter-spacing:-0.3px;font-weight:normal;">385 000,00</div>
<div class="t" style="left:165px;top:604.61px;font-size:11px;color:#5c5c5c;letter-spacing:-0.3px;font-weight:normal;">Комментарий:</div>
<div class="inp" style="left:267px;top:600px;width:334px;height:20px"></div>
</div></body></html>
